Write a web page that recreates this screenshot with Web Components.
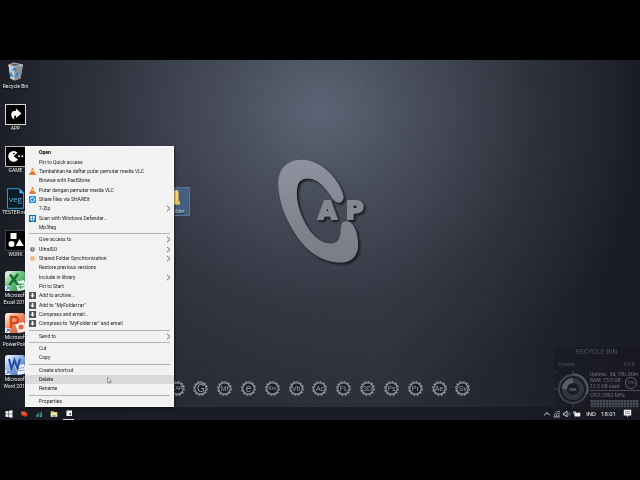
<!DOCTYPE html>
<html lang="en">
<head>
<meta charset="utf-8">
<title>Desktop</title>
<style>
html,body{margin:0;min-height:100%;background:#000}
body{min-height:100vh;display:flex;flex-direction:column;justify-content:center;font-family:Roboto,"Open Sans",sans-serif;font-size:5px;line-height:7px}
</style>
</head>
<body>
<desk-screen></desk-screen>
<script>
const define = (name, html, setup) => customElements.define(name, class extends HTMLElement {
  connectedCallback() {
    if (this.shadowRoot) return;
    const root = this.attachShadow({ mode: 'open' });
    root.innerHTML = typeof html === 'function' ? html(this) : html;
    if (setup) setup(this, root);
  }
});

const office = (c1, c2, letter, deco) => `<svg viewBox="0 0 21 21"><defs><linearGradient id="g" x1="0" y1="0" x2="1" y2="1"><stop offset="0" stop-color="#fff"/><stop offset=".4" stop-color="${c2}"/><stop offset="1" stop-color="${c1}"/></linearGradient></defs>
<rect x="0" y="0" width="20" height="20" rx="3" fill="url(#g)"/><path d="M10 11l9-2 3 9-9 2z" fill="#fff" opacity=".9"/>${deco}${letter}<rect x="0" y="15" width="5" height="5" fill="#eef3fb"/><path d="M1 19.3l2.5-2.5M1.800 16.200h2.300v2.300" stroke="#1a5fae" fill="none"/></svg>`;

const big = {
  bin: `<svg viewBox="0 0 21 21"><path d="M3.5 3L9 1l9 2-2.500 13.500L9.500 18.500 5.500 16.500z" fill="#a9adb2"/><path d="M3.500 3l6 1.500L9.500 18.500 5.500 16.500z" fill="#c9cccf"/><path d="M9.500 4.500L18 3l-2.500 13.500-6 2z" fill="#8f9398"/><path d="M3.500 3L9 1l9 2-8.500 1.500z" fill="#5c6066" stroke="#d5d8da" stroke-width=".7"/><path d="M7.500 8.500l2-2 1.800 2.300M6.300 10.500l-.3 3 2.200.8M12 10.500l.6 2.300-2.400 1.900" fill="none" stroke="#1784dc" stroke-width="1.600"/></svg>`,
  app: `<svg viewBox="0 0 21 21"><rect x=".5" y=".5" width="20" height="20" fill="#000" stroke="#d8d8d8"/><path d="M11 4.500L16.500 9.500 11 14v-2.600c-1.800 0-2.600 1.800-1.600 4.200C5.700 14 4.800 8.200 9 7.100l2-.3z" fill="#fff"/></svg>`,
  game: `<svg viewBox="0 0 21 21"><rect x=".5" y=".5" width="20" height="20" fill="#000" stroke="#b9b9b9"/><path d="M12.500 6.500A5.400 5.400 0 1 0 13 13.500L8.800 10.300z" fill="#fff"/><circle cx="9" cy="7.600" r=".9"/><circle cx="14" cy="10.300" r="1" fill="#fff"/><circle cx="17.300" cy="10.300" r="1" fill="#fff"/></svg>`,
  veg: `<svg viewBox="0 0 21 21"><path d="M2.500 .7h12l4 4V20.300h-16z" fill="#0a1c2b" stroke="#2e9bd0"/><path d="M14.500 .7v4.500h4.500z" fill="#49c0ee"/><text x="10.500" y="13.500" text-anchor="middle" font-size="8" fill="#5cc0f0" font-family="Open Sans">veg</text></svg>`,
  work: `<svg viewBox="0 0 21 21"><rect x=".5" y=".5" width="20" height="20" fill="#000" stroke="#3e4046"/><rect x="5.500" y="3" width="6" height="6" fill="#fff"/><circle cx="6.500" cy="14" r="3" fill="#fff"/><path d="M14.500 9l4.200 7h-8z" fill="#fff"/></svg>`,
  excel: office('#1f8b3d', '#7cc98a', '<path d="M5 3.500l8 10.500M13 3L4.500 14" stroke="#16702d" stroke-width="2.600" fill="none"/>', '<path d="M13 14l6-1M13.500 16.500l6-1M15 12l1 6" stroke="#3d9d56" fill="none"/>'),
  ppt: office('#c8401b', '#f39a72', '<path d="M6 15V4h4a3 3 0 0 1 0 6.200H6" stroke="#d24a1c" stroke-width="2.400" fill="none"/>', '<circle cx="16" cy="14" r="2.500" fill="#e2673d"/>'),
  word: office('#2b5ab0', '#9ebcec', '<path d="M4 4l2.500 9.500L9.500 5l3 8.500L15 4" stroke="#1f4fa5" stroke-width="2" fill="none"/>', '<path d="M13 13.500l6-1M13.500 16l6-1" stroke="#7fa0da" fill="none"/>'),
  folder: `<svg viewBox="0 0 21 21"><path d="M3 2h6l1.500 1.500H15V16H3z" fill="#e9b93f"/><path d="M10 1.500h4.500V13l2 1v3H10z" fill="#f8dc7d"/><path d="M13 12l3.500 1.500V17H13z" fill="#e6b94b"/></svg>`
};
const cone = `<svg viewBox="0 0 7 7"><path d="M3 .3h1L6 5.500H1z" fill="#ef7b1a"/><path d="M2.500 2h2l.5 1.300H2z" fill="#fbe6d2"/><path d="M.5 5.200h6l.3 1.600H.2z" fill="#d9620c"/></svg>`;
const rar = `<svg viewBox="0 0 7 7"><rect width="7" height="7" fill="#53565a"/><path d="M3.500 1v3" stroke="#fff" stroke-width="1.500"/><path d="M1.500 3.300h4L3.500 5.800z" fill="#fff"/></svg>`;
const small = {
  cone, rar,
  share: `<svg viewBox="0 0 7 7"><rect width="7" height="7" rx="1" fill="#1e8fe8"/><circle cx="3.500" cy="3.500" r="2" fill="none" stroke="#d8efff" stroke-width=".9"/><path d="M2 1.500h2M5.500 3v1.500M2 5.500h1.500" stroke="#fff" stroke-width=".8"/></svg>`,
  shield: `<svg viewBox="0 0 7 7"><rect width="7" height="7" fill="#0b67b8"/><path d="M3.500.8l2.400.8v2C5.900 5 4.800 5.800 3.500 6.400 2.200 5.800 1.100 5 1.100 3.600v-2z" fill="#fff"/><path d="M3.500 1v5M1.200 3.500h4.600" stroke="#0b67b8" stroke-width=".6"/></svg>`,
  iso: `<svg viewBox="0 0 7 7"><circle cx="3.500" cy="3.400" r="2.300" fill="#77747f"/><path d="M3.500 3.400L2 1.500 5 1.500z" fill="#b9a77a"/><circle cx="3.500" cy="3.400" r=".7" fill="#dcdce6"/></svg>`,
  sync: `<svg viewBox="0 0 7 7"><rect x="1.500" y="1.500" width="4" height="4" fill="#eba652"/><rect x="2.500" y="2.500" width="2" height="2" fill="#f6cf93"/></svg>`
};

define('desk-icon', el => `<style>
:host{display:block;color:#f2f2f2}
button{all:unset;box-sizing:border-box;width:100%;display:flex;flex-direction:column;align-items:center;padding-top:2px;text-align:center;text-shadow:0 1px 1px #000}
:host([selected]) button{background:#45607f;outline:1px solid #5a7696;outline-offset:-1px;padding-bottom:1px;color:#cfd8e4}
svg{width:21px;height:21px;display:block}
:host([selected]) svg{height:19px}
span{white-space:pre}
</style><button type="button">${big[el.getAttribute('icon')]}<span><slot></slot></span></button>`);

define('menu-item', el => `<style>
:host{display:flex;flex:1;min-height:0}
button{all:unset;box-sizing:border-box;flex:1;display:grid;grid-template-columns:7px 1fr 5px;column-gap:3px;align-items:center;padding:0 3px 0 4px;color:#1c1c1c;white-space:nowrap}
:host([strong]) button{font-weight:700;color:#000}
:host([active]) button{background:#dadada}
svg{display:block;width:7px;height:7px}
.more{width:5px}
</style><button type="button" role="menuitem"><i>${small[el.getAttribute('icon')] || ''}</i><span><slot></slot></span>${el.hasAttribute('more') ? '<svg class="more" viewBox="0 0 5 7"><path d="M1 .8l3 2.700-3 2.700" fill="none" stroke="#444" stroke-width=".8"/></svg>' : ''}</button>`);

define('menu-line', `<style>:host{display:flex;flex:0 0 3px;align-items:center;padding:0 4px}hr{flex:1;margin:0;border:0;height:1px;background:#b4b4b4}</style><hr>`);

define('context-menu', `<style>
:host{display:flex;flex-direction:column;box-sizing:border-box;width:149px;height:261px;padding:2px 0 1px;background:#f2f2f2;box-shadow:inset 0 0 0 1px #fafafa,1px 1px 2px #0008}
</style><slot></slot>`);

define('app-badge', `<style>
:host{display:block}
button{all:unset;display:grid;place-items:center;color:#a0a3aa}
svg,span{grid-area:1/1}
svg{width:15px;height:15px;display:block}
span{font:5px/7px "Liberation Sans",sans-serif}
:host([mid]) span{font-size:7px}
:host([big]) span{font-size:10px;line-height:10px}
</style><button type="button"><svg viewBox="0 0 15 15"><circle cx="7.500" cy="7.500" r="6.700" fill="none" stroke="#90939a" stroke-width="1.300" stroke-dasharray="2.200 1.300"/><circle cx="7.500" cy="7.500" r="5.700" fill="#1c1f27" stroke="#90939a" stroke-width="1.200"/></svg><span><slot></slot></span></button>`);

define('brand-mark', `<style>:host{display:block}svg{display:block;width:100%;overflow:visible}</style>
<svg viewBox="0 0 360 390" role="img" aria-label="CAP"><defs><linearGradient id="m" x1="0" y1="0" x2="0" y2="1"><stop offset="0" stop-color="#8d929e"/><stop offset="1" stop-color="#797c86"/></linearGradient><filter id="s" x="-20%" y="-20%" width="150%" height="150%"><feDropShadow dx="5" dy="5" stdDeviation="3" flood-color="#05070c" flood-opacity=".9"/></filter></defs>
<g filter="url(#s)" fill="url(#m)"><path d="M247 155C246 125 195 45 122 44C75 44 53 78 54 118C56 170 78 225 108 268C140 318 188 348 240 348C275 348 293 322 290 288C288 255 276 228 258 226C243 225 239 236 239 254C238 279 230 292 208 292C174 290 145 258 127 218C111 185 104 146 112 118C119 99 137 97 155 101C184 110 202 141 216 160C229 177 247 172 247 155Z"/>
<g font-family="DejaVu Sans" font-weight="700" font-size="72" fill="#85888f" stroke="#85888f" stroke-width="6" stroke-linejoin="round"><text x="172" y="219">A</text><text x="254" y="219">P</text></g></g></svg>`);

define('system-gadget', `<style>
:host{display:grid;grid-template-columns:34px 1fr;box-sizing:border-box;width:86px;color:#72747b;background:#14161c55;font:5px/6px Roboto,sans-serif}
header{grid-column:1/-1;display:flex;flex-wrap:wrap;justify-content:space-between;padding:1px 5px 4px 4px;color:#4d5057}
h2{flex:0 0 100%;margin:0 0 4px;text-align:center;font:7px/9px Roboto,sans-serif}
svg{display:block}
.dial{width:36px;height:46px;overflow:visible}
.info{position:relative;display:flex;flex-direction:column;padding-left:2px;white-space:nowrap}
.info p{margin:0}
.cpu{margin-top:1px!important;padding-top:1px;border-top:1px solid #4a4c52}
.ring{position:absolute;right:3px;top:6px;width:12px;height:12px;box-sizing:border-box;border:1px solid #5b5d64;border-radius:50%;display:grid;place-items:center;font-size:4px}
.graph{height:10px;margin:2px 1px 0 0;background:repeating-linear-gradient(90deg,#15171c88 0 1px,transparent 1px 3px),repeating-linear-gradient(#4b4d54 0 2px,#33353c 2px 3px)}
</style><header><h2>RECYCLE BIN</h2><span>0 items</span><span>0.0 B</span></header>
<svg class="dial" viewBox="0 0 36 46"><g fill="none" stroke="#42444b"><circle cx="19" cy="18" r="14" stroke-width="2"/><circle cx="19" cy="18" r="8.500" stroke="#33353c" stroke-width="5"/><path d="M10.500 18a8.500 8.500 0 0 1 8.500-8.500" stroke="#5b5d64" stroke-width="5"/><path d="M19 3a15 15 0 0 1 14 20" stroke="#5b5d64" stroke-width="1.500"/><path d="M0 18h4M19 0v3M19 33v5M33 18h3M0 1h2M0 36h2"/></g><text x="19" y="19.500" text-anchor="middle" font-size="4" font-weight="700" fill="#77797f">58%</text></svg>
<div class="info"><p>Uptime: &nbsp;3d, 19h, 00m</p><p>RAM: 15.9 GB</p><p>12.5 GB used</p><div class="ring">79%</div><p class="cpu">CPU: 2892 MHz</p><div class="graph"></div></div>`);

define('task-bar', `<style>
:host{display:flex;align-items:stretch;justify-content:space-between;height:13px;background:#17191fcc;color:#f0f0f0}
nav,.tray{display:flex;align-items:center}
nav{gap:4px;padding-left:3px}
button{all:unset;width:11px;height:13px;display:grid;place-items:center;box-sizing:border-box}
button.on{border-bottom:1px solid #ddd}
svg{display:block;width:8px;height:8px}
.tray{gap:2px;padding-right:8px;font-size:6px}
.tray button{width:8px}
.tray .note{width:10px;margin-left:4px}
.tray .note svg{width:9px;height:9px}
.tray time,.tray span{margin-left:3px}
</style><nav>
<button type="button" aria-label="Start"><svg viewBox="0 0 8 8"><path d="M.5 1.300l3-.4v2.900h-3zM4 .8l3.500-.5v3.500H4zM.5 4.200h3v2.900l-3-.4zM4 4.200h3.500v3.500L4 7.200z" fill="#fff"/></svg></button>
<button type="button" aria-label="Capture"><svg viewBox="0 0 8 8"><path d="M1 1.500l4-.3 2.800 2.600-1.500 3L3 6.300.8 4z" fill="#d53d20"/><path d="M2 2.500l3.500 1.300" stroke="#ff8b63"/></svg></button>
<button type="button" aria-label="Editor"><svg viewBox="0 0 8 8"><path d="M1.500 7V4.500l2-1V7z" fill="#22b573"/><path d="M1.500 1.500l2.500 3 3-3.500v6H5V4.500" fill="#4c93b8"/><path d="M4.500 6.500L7 2" stroke="#1e5a88"/></svg></button>
<button type="button" aria-label="File Explorer"><svg viewBox="0 0 8 8"><path d="M.8 1.300h2.500l.7.8h3.200v4.700H.8z" fill="#ecd27c"/><path d="M.8 3.500h6.400v3.300H.8z" fill="#f7e8ab"/><path d="M2.500 5h3v2h-3z" fill="#68a5ba"/></svg></button>
<button type="button" class="on" aria-label="App"><svg viewBox="0 0 8 8"><path d="M1.500 1.500h5.500v5.500H1.500z" fill="#fff"/><path d="M4.500 4.200h1.500V5.800H4.500z" fill="#111"/></svg></button></nav>
<div class="tray">
<button type="button" aria-label="Hidden icons"><svg viewBox="0 0 8 8"><path d="M1.300 5.200L4 2.500l2.700 2.700" fill="none" stroke="#eee"/></svg></button>
<button type="button" aria-label="Network"><svg viewBox="0 0 8 8"><path d="M1 7a6 6 0 0 1 6-6M3 7a4 4 0 0 1 4-4M5 7a2 2 0 0 1 2-2M1 7h6" fill="none" stroke="#bbb" stroke-width=".8"/></svg></button>
<button type="button" aria-label="Volume"><svg viewBox="0 0 8 8"><path d="M.5 3h1.500L4 1v6L2 5H.5z" fill="none" stroke="#eee" stroke-width=".8"/><path d="M5.300 2.800q.8 1.200 0 2.400M6.500 1.800q1.500 2.200 0 4.400" fill="none" stroke="#888" stroke-width=".7"/></svg></button>
<button type="button" aria-label="Battery"><svg viewBox="0 0 8 8"><path d="M1.500 2.700h5.800v3.800H1.500z" fill="#eee"/><path d="M.8 1v2.500M2.300 1v2M.3 3h2.500" stroke="#eee" stroke-width=".7"/></svg></button>
<span>IND</span><time>18:01</time>
<button type="button" class="note" aria-label="Notifications"><svg viewBox="0 0 9 9"><path d="M.8.800h7.400v5.700H5.500L4 8.300V6.500H.8z" fill="#f4f4f4"/><path d="M2 2.600h5M2 4.400h5" stroke="#555" stroke-width=".6"/></svg></button></div>`);

define('desk-screen', `<style>
:host{position:relative;display:flex;flex-direction:column;width:100%;aspect-ratio:16/9;overflow:hidden;
background:radial-gradient(ellipse 52% 85% at 50% 14%,#585f6f 0,#4b505ecc 30%,#373c4880 65%,transparent 100%),linear-gradient(90deg,#181b22 0,#252932 25%,#292d36 60%,#1d2027 85%,#17191f 100%)}
.grain{position:absolute;inset:0;width:100%;height:100%;opacity:.2;mix-blend-mode:overlay}
.icons{position:relative;flex:1;display:grid;grid-template-columns:31px;grid-auto-rows:1fr;padding-bottom:12px;min-height:0}
task-bar{position:relative}
brand-mark{position:absolute;left:40.600%;top:85px;width:19%}
.gears{position:absolute;inset:auto 0 24px;display:flex;justify-content:space-between;width:47%;margin:auto}
system-gadget{position:absolute;right:0;bottom:3px}
.sel{position:absolute;left:158px;top:127px;width:32px}
context-menu{position:absolute;left:25px;top:86px}
.cursor{position:absolute;left:107px;top:317px;width:5px;height:7px}
</style>
<svg class="grain" aria-hidden="true"><filter id="n"><feTurbulence type="fractalNoise" baseFrequency=".6" numOctaves="2"/><feColorMatrix type="saturate" values="0"/></filter><rect width="100%" height="100%" filter="url(#n)"/></svg>
<brand-mark></brand-mark>
<div class="icons">
<desk-icon icon="bin">Recycle Bin</desk-icon><desk-icon icon="app">APP</desk-icon><desk-icon icon="game">GAME</desk-icon><desk-icon icon="veg">TESTER.veg</desk-icon><desk-icon icon="work">WORK</desk-icon><desk-icon icon="excel">Microsoft
Excel 2010</desk-icon><desk-icon icon="ppt">Microsoft
PowerPoint</desk-icon><desk-icon icon="word">Microsoft
Word 2010</desk-icon></div>
<div class="gears"><app-badge>CAP</app-badge><app-badge big>G</app-badge><app-badge mid>Mf</app-badge><app-badge big>e</app-badge><app-badge>Km</app-badge><app-badge mid>Vb</app-badge><app-badge mid>Ac</app-badge><app-badge mid>FL</app-badge><app-badge mid>3D</app-badge><app-badge mid>Ps</app-badge><app-badge mid>Pr</app-badge><app-badge mid>Ae</app-badge><app-badge mid>Sv</app-badge></div>
<system-gadget></system-gadget>
<task-bar></task-bar>
<desk-icon class="sel" icon="folder" selected>MyFolder</desk-icon>
<context-menu role="menu">
<menu-item strong>Open</menu-item><menu-item>Pin to Quick access</menu-item><menu-item icon="cone">Tambahkan ke daftar putar pemutar media VLC</menu-item><menu-item>Browse with FastStone</menu-item><menu-item icon="cone">Putar dengan pemutar media VLC</menu-item><menu-item icon="share">Share files via SHAREit</menu-item><menu-item more>7-Zip</menu-item><menu-item icon="shield">Scan with Windows Defender...</menu-item><menu-item>Mp3tag</menu-item>
<menu-line></menu-line>
<menu-item more>Give access to</menu-item><menu-item icon="iso" more>UltraISO</menu-item><menu-item icon="sync" more>Shared Folder Synchronization</menu-item><menu-item>Restore previous versions</menu-item><menu-item more>Include in library</menu-item><menu-item>Pin to Start</menu-item><menu-item icon="rar">Add to archive...</menu-item><menu-item icon="rar">Add to "MyFolder.rar"</menu-item><menu-item icon="rar">Compress and email...</menu-item><menu-item icon="rar">Compress to "MyFolder.rar" and email</menu-item>
<menu-line></menu-line>
<menu-item more>Send to</menu-item>
<menu-line></menu-line>
<menu-item>Cut</menu-item><menu-item>Copy</menu-item>
<menu-line></menu-line>
<menu-item>Create shortcut</menu-item><menu-item active>Delete</menu-item><menu-item>Rename</menu-item>
<menu-line></menu-line>
<menu-item>Properties</menu-item>
</context-menu>
<svg class="cursor" viewBox="0 0 5 7" aria-hidden="true"><path d="M.5.500v5.300l1.300-1.200.8 1.900.8-.4-.8-1.800h1.800z" fill="#fff" stroke="#444" stroke-width=".5"/></svg>`);
</script>
</body>
</html>
